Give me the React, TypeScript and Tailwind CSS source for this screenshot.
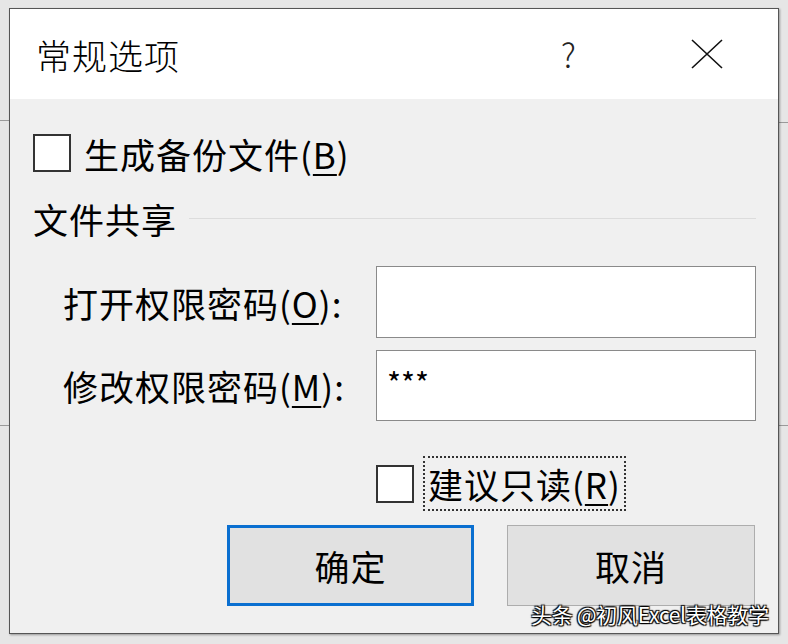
import React from "react";

const font = {
  fontFamily: '"Noto Sans CJK SC", "Microsoft YaHei", "Noto Sans", sans-serif',
};

function Checkbox() {
  return <div className="w-[38px] h-[38px] border-2 border-[#333] bg-white shrink-0" />;
}

function Label({ text, hot, tail }: { text: string; hot: string; tail?: string }) {
  return (
    <span className="tracking-[1px] whitespace-nowrap">
      {text}(<span className="underline underline-offset-[5px] decoration-[2px]">{hot}</span>){tail}
    </span>
  );
}

export default function App() {
  return (
    <div
      className="relative w-[788px] h-[644px] bg-[#e6e6e6] overflow-hidden text-black"
      style={font}
    >
      {/* bits of the window behind the dialog */}
      <div className="absolute left-0 top-[120px] w-[10px] h-px bg-[#9a9a9a]" />
      <div className="absolute left-0 top-[425px] w-[10px] h-px bg-[#9a9a9a]" />
      <div className="absolute right-0 top-[122px] w-[10px] h-px bg-[#9a9a9a]" />
      <div className="absolute right-0 top-[425px] w-[10px] h-px bg-[#9a9a9a]" />

      <div className="relative ml-[9px] mt-[8px] w-[770px] h-[626px] border border-[#555] bg-[#f0f0f0] flex flex-col shadow-[1px_1px_2px_rgba(0,0,0,0.35)]">
        {/* title bar */}
        <div className="h-[90px] bg-white flex items-center pl-[26px] shrink-0">
          <span className="text-[35px] font-light leading-none tracking-[1px]">常规选项</span>
          <span className="ml-auto mr-[114px] text-[33px] font-light leading-none text-[#222]">?</span>
          <svg width="34" height="32" viewBox="0 0 34 32" className="mr-[54px]">
            <path d="M2 2 L32 30 M32 2 L2 30" stroke="#111" strokeWidth="1.6" fill="none" />
          </svg>
        </div>

        {/* body */}
        <div className="flex flex-col text-[35px] leading-none">
          <div className="mt-[35px] ml-[23px] h-[38px] flex items-center gap-[13px]">
            <Checkbox />
            <Label text="生成备份文件" hot="B" />
          </div>

          <div className="mt-[26px] ml-[23px] mr-[22px] h-[40px] flex items-center gap-[12px]">
            <span className="tracking-[1px]">文件共享</span>
            <div className="flex-1 h-px bg-[#dcdcdc]" />
          </div>

          <div className="mt-[28px] ml-[53px] flex items-center">
            <div className="w-[313px]">
              <Label text="打开权限密码" hot="O" tail=":" />
            </div>
            <div className="w-[380px] h-[72px] border border-[#8a8a8a] bg-white" />
          </div>

          <div className="mt-[12px] ml-[53px] flex items-center">
            <div className="w-[313px]">
              <Label text="修改权限密码" hot="M" tail=":" />
            </div>
            <div className="w-[380px] h-[71px] border border-[#8a8a8a] bg-white pl-[10px] pt-[16px] text-[30px] leading-none">
              ***
            </div>
          </div>

          <div className="mt-[35px] ml-[366px] h-[55px] flex items-center gap-[9px]">
            <Checkbox />
            <div className="h-[55px] px-[3px] flex items-center border-2 border-dotted border-[#333]">
              <Label text="建议只读" hot="R" />
            </div>
          </div>

          <div className="mt-[14px] ml-[217px] flex gap-[33px]">
            <button className="w-[247px] h-[81px] border-[3px] border-[#0a6fd0] bg-[#e1e1e1] text-[35px] tracking-[1px]">
              确定
            </button>
            <button className="w-[248px] h-[81px] border border-[#adadad] bg-[#e1e1e1] text-[35px] tracking-[1px]">
              取消
            </button>
          </div>
        </div>
      </div>

      {/* watermark */}
      <div className="absolute left-[531px] top-[604px] whitespace-nowrap text-[21px] leading-none text-white tracking-[-0.3px] [text-shadow:1px_1px_1px_#000,-1px_-1px_1px_#000,1px_-1px_1px_#000,-1px_1px_1px_#000]">
        头条 @初风Excel表格教学
      </div>
    </div>
  );
}
